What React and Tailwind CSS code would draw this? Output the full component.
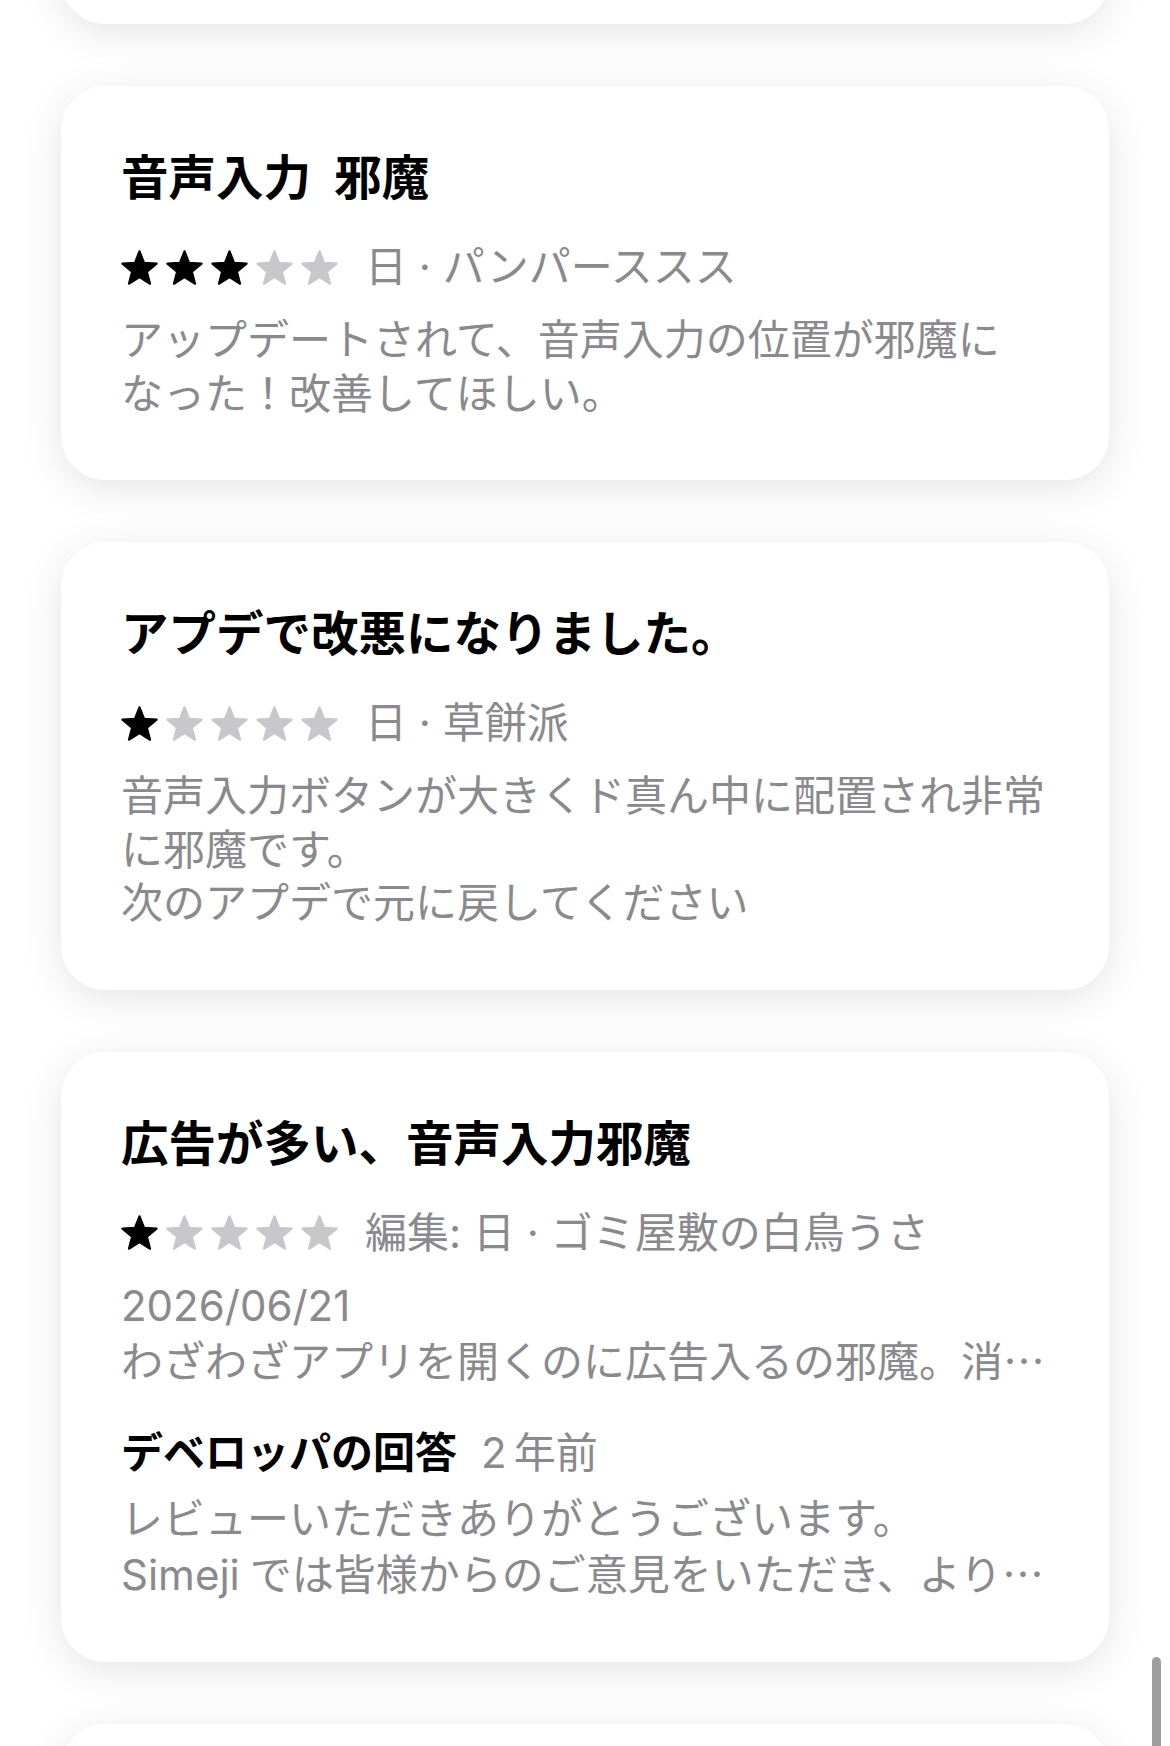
import React from "react";

const FONT = { fontFamily: '"Inter", "Noto Sans CJK JP", sans-serif' };

function Star({ filled }) {
  return (
    <svg viewBox="1.3 1.6 21.4 20.4" className="w-[37px] h-[35px] shrink-0">
      <path
        d="M12 2.3 L14.7 9.08 L21.99 9.555 L16.37 14.22 L18.17 21.29 L12 17.4 L5.83 21.29 L7.63 14.22 L2.01 9.555 L9.3 9.08 Z"
        fill={filled ? "#000000" : "#c7c7cc"}
        stroke={filled ? "#000000" : "#c7c7cc"}
        strokeWidth="1.2"
        strokeLinejoin="round"
      />
    </svg>
  );
}

function Stars({ n }) {
  return (
    <div className="flex items-center gap-[8px]">
      {[0, 1, 2, 3, 4].map((i) => (
        <Star key={i} filled={i < n} />
      ))}
    </div>
  );
}

const Ell = () => (
  <span style={{ fontFamily: '"Noto Sans CJK JP", sans-serif' }}>…</span>
);

function Card({ title, stars, meta, lines, children }) {
  return (
    <div className="rounded-[44px] bg-white shadow-[0_8px_40px_rgba(0,0,0,0.11)] pl-[60px] pr-[40px] pt-[64px] pb-[60px]">
      <div className="text-[47.5px] leading-[56px] font-bold text-black whitespace-nowrap [word-spacing:12px]">
        {title}
      </div>
      <div className="mt-[34px] flex items-center h-[54px]">
        <Stars n={stars} />
        <div className="ml-[27px] text-[42px] leading-[54px] text-[#8a8a8e] whitespace-nowrap">
          {meta}
        </div>
      </div>
      <div className="mt-[19px] text-[42px] leading-[53.5px] text-[#8a8a8e]">
        {lines.map((l, i) => (
          <div key={i} className="whitespace-nowrap">
            {l}
          </div>
        ))}
      </div>
      {children}
    </div>
  );
}

export default function App() {
  return (
    <div className="relative h-[1746px] overflow-hidden bg-white" style={FONT}>
      <div className="flex flex-col gap-[62px] px-[61px]">
        <div className="-mt-[176px] h-[200px] rounded-[44px] bg-white shadow-[0_8px_40px_rgba(0,0,0,0.11)]" />
        <Card
          title="音声入力 邪魔"
          stars={3}
          meta="日 · パンパーススス"
          lines={[
            "アップデートされて、音声入力の位置が邪魔に",
            "なった！改善してほしい。",
          ]}
        />
        <Card
          title="アプデで改悪になりました。"
          stars={1}
          meta="日 · 草餅派"
          lines={[
            "音声入力ボタンが大きくド真ん中に配置され非常",
            "に邪魔です。",
            "次のアプデで元に戻してください",
          ]}
        />
        <Card
          title="広告が多い、音声入力邪魔"
          stars={1}
          meta="編集: 日 · ゴミ屋敷の白鳥うさ"
          lines={[
            "2026/06/21",
            <>
              わざわざアプリを開くのに広告入るの邪魔。消
              <Ell />
            </>,
          ]}
        >
          <div className="mt-[37px] flex items-center h-[54px] text-[42px] leading-[54px] whitespace-nowrap">
            <span className="font-bold text-black">デベロッパの回答</span>
            <span className="ml-[24px] text-[#8a8a8e]">
              <span className="mr-[7px]">2</span>年前
            </span>
          </div>
          <div className="mt-[12px] text-[42px] leading-[53.5px] text-[#8a8a8e]">
            <div className="whitespace-nowrap">
              レビューいただきありがとうございます。
            </div>
            <div className="whitespace-nowrap">
              <span className="mr-[10px]">Simeji</span>では皆様からのご意見をいただき、より
              <Ell />
            </div>
          </div>
        </Card>
        <div className="h-[300px] rounded-[44px] bg-white shadow-[0_8px_40px_rgba(0,0,0,0.11)]" />
      </div>
      <div className="absolute left-[1152px] top-[1657px] w-[9px] h-[140px] rounded-full bg-[#9e9e9e]" />
    </div>
  );
}
